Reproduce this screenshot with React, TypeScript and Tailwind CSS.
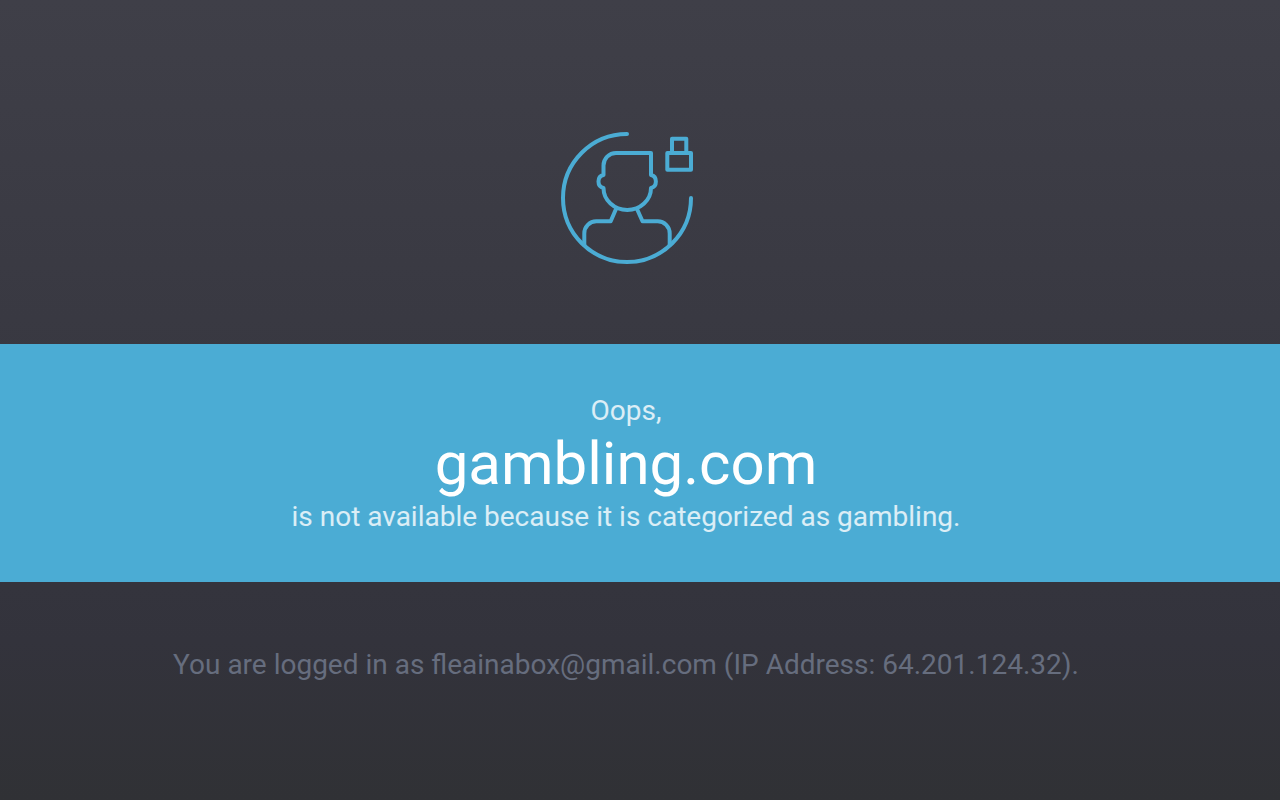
import React from 'react';

const UserUsbIcon: React.FC = () => (
  <svg
    className="w-[136px] h-[136px]"
    viewBox="0 0 136 136"
    fill="none"
    stroke="#4bacd4"
    strokeWidth={4}
    strokeLinecap="round"
    strokeLinejoin="round"
    aria-hidden="true"
  >
    <path d="M68 4A64 64 0 1 0 132 68" />
    {/* head and ears */}
    <path d="M44.5 45V35.5A12.5 12.5 0 0 1 57 23H92V45C98.5 46.5 98.5 56.5 92 58A23.75 22 0 0 1 44.5 58C37.8 56.5 37.8 46.5 44.5 45Z" />
    {/* shoulders */}
    <path d="M57 79L51.7 91.3H37.5A12 12 0 0 0 25.3 103.5V115" />
    <path d="M78 79L83.5 91.3H98.5A12 12 0 0 1 110.7 103.5V115" />
    {/* usb stick */}
    <path d="M108.3 23H132V39.7H108.3Z" />
    <path d="M113 23V8.7H127.3V23" />
  </svg>
);

interface BlockedSite {
  domain: string;
  category: string;
  email: string;
  ip: string;
}

const site: BlockedSite = {
  domain: 'gambling.com',
  category: 'gambling',
  email: 'fleainabox@gmail.com',
  ip: '64.201.124.32',
};

export default function App() {
  return (
    <div className="min-h-screen bg-linear-to-b from-[#3f3f48] via-[#33333c] via-80% to-[#303135] font-['Roboto',sans-serif] text-center text-[28px] leading-8">
      <header className="flex justify-center pt-[130px] pb-[78px] pr-[26px]">
        <UserUsbIcon />
      </header>

      <main className="bg-[#4bacd4] pt-[51px] pb-[49px] pr-7 text-white/80">
        <p>Oops,</p>
        <h1 className="text-[60px] leading-[74px] text-white">{site.domain}</h1>
        <p>is not available because it is categorized as {site.category}.</p>
      </main>

      <footer className="pt-[67px] pb-16 pr-7 text-[#666d7e]">
        <p>
          You are logged in as {site.email} (IP Address: {site.ip}).
        </p>
      </footer>
    </div>
  );
}
